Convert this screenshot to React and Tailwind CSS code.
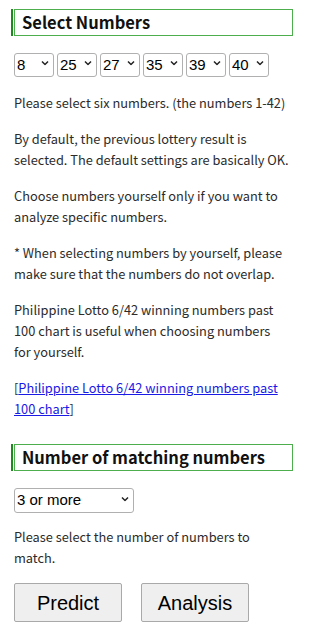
import React from 'react';

const NUMBERS = Array.from({ length: 42 }, (_, i) => i + 1);
const DEFAULT_PICKS = [8, 25, 27, 35, 39, 40];
const MATCH_OPTIONS = ['3 or more', '4 or more', '5 or more', '6'];

const bodyFont = { fontFamily: '"Noto Sans CJK JP", "Noto Sans", sans-serif' };
const controlFont = { fontFamily: '"Liberation Sans", Arial, sans-serif' };

const Chevron = () => (
    <svg width="8" height="5" viewBox="0 0 8 5" className="absolute right-[5px] top-1/2 -translate-y-1/2 pointer-events-none">
        <path d="M1 1l3 3 3-3" fill="none" stroke="#222" strokeWidth="1.5" />
    </svg>
);

const Select = ({ className, value, options }) => (
    <div className={`relative ${className}`}>
        <select
            defaultValue={value}
            className="appearance-none w-full h-full border border-[#b0b0b0] rounded-[3px] bg-white text-[15px] text-black pl-[2px] pr-[12px]"
            style={controlFont}
        >
            {options.map((o) => (
                <option key={o} value={o}>{o}</option>
            ))}
        </select>
        <Chevron />
    </div>
);

const SectionTitle = ({ children }) => (
    <div className="border-l-2 border-[#1e8a1e] pl-px">
        <h2 className="border border-[#4cae4c] px-[7px] h-[27px] flex items-center text-[16.5px] font-bold text-[#111] leading-none whitespace-nowrap">
            {children}
        </h2>
    </div>
);

const ActionButton = ({ children }) => (
    <button
        className="w-[108px] h-[39px] bg-[#efefef] border border-[#a9a9a9] rounded-[2px] text-[20px] text-black"
        style={controlFont}
    >
        {children}
    </button>
);

const App = () => {
    return (
        <div className="w-[300px] bg-white text-[#2b2b2b] pl-[11px] pr-[7px] pt-[9px] pb-2" style={bodyFont}>
            <SectionTitle>Select Numbers</SectionTitle>

            {/* Number pickers */}
            <div className="flex gap-[3px] pl-[3px] mt-[15px]">
                {DEFAULT_PICKS.map((n, i) => (
                    <Select key={i} className="w-[40px] h-[24px]" value={n} options={NUMBERS} />
                ))}
            </div>

            <div className="pl-[3px] text-[12.8px] leading-[21px]">
                <p className="mt-[17px]">Please select six numbers. (the numbers 1-42)</p>
                <p className="mt-[15px]">By default, the previous lottery result is selected. The default settings are basically OK.</p>
                <p className="mt-[15px]">Choose numbers yourself only if you want to analyze specific numbers.</p>
                <p className="mt-[15px]">* When selecting numbers by yourself, please make sure that the numbers do not overlap.</p>
                <p className="mt-[15px]">
                    Philippine Lotto 6/42 winning numbers past 100 chart is useful when choosing numbers{' '}
                    <span className="whitespace-nowrap">for yourself.</span>
                </p>
                <p className="mt-[15px]">
                    [<a href="#" className="text-[#1a1ae6] underline">Philippine Lotto 6/42 winning numbers past 100 chart</a>]
                </p>
            </div>

            <div className="mt-[25px]">
                <SectionTitle>Number of matching numbers</SectionTitle>
            </div>

            <div className="pl-[3px]">
                <Select className="mt-[15px] w-[120px] h-[25px]" value={MATCH_OPTIONS[0]} options={MATCH_OPTIONS} />

                <p className="mt-[15px] text-[12.8px] leading-[21px]">Please select the number of numbers to match.</p>

                <div className="flex gap-[19px] mt-[15px]">
                    <ActionButton>Predict</ActionButton>
                    <ActionButton>Analysis</ActionButton>
                </div>
            </div>
        </div>
    );
};

export default App;
